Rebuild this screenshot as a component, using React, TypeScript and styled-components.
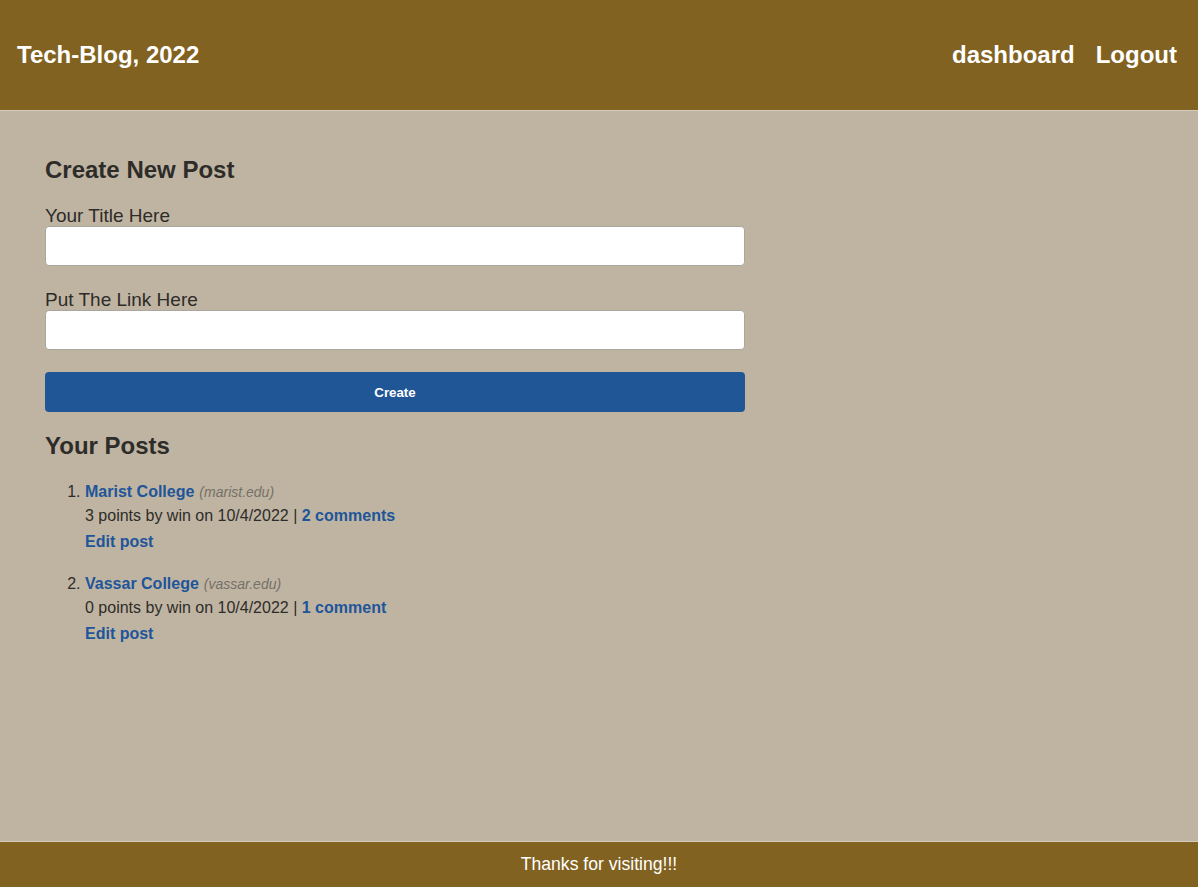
import React from "react";
import styled, { createGlobalStyle } from "styled-components";

const Global = createGlobalStyle`
  html, body { margin: 0; padding: 0; }
  body {
    font-family: "Liberation Sans", Arial, Helvetica, sans-serif;
    background: #bfb4a2;
    color: #2e2c29;
  }
  * { box-sizing: border-box; }
`;

const Page = styled.div`
  min-height: 100vh;
  display: flex;
  flex-direction: column;
`;

const Header = styled.header`
  height: 111px;
  background: #826220;
  border-bottom: 1px solid #d6ccbc;
  display: flex;
  align-items: center;
  justify-content: space-between;
  padding: 0 21px 0 17px;
  color: #fff;
`;

const Brand = styled.a`
  font-size: 24px;
  line-height: 28px;
  font-weight: 700;
  color: #fff;
  text-decoration: none;
`;

const Nav = styled.nav`
  display: flex;
  gap: 21px;
`;

const NavLink = styled.a`
  font-size: 24px;
  line-height: 28px;
  font-weight: 700;
  color: #fff;
  text-decoration: none;
`;

const Main = styled.main`
  flex: 1;
  padding: 46px 45px 40px;
`;

const Column = styled.div`
  width: 700px;
  display: flex;
  flex-direction: column;
`;

const Heading = styled.h2`
  margin: 0;
  font-size: 24px;
  line-height: 26px;
  font-weight: 700;
  color: #2e2c29;
`;

const Form = styled.form`
  display: flex;
  flex-direction: column;
  margin-top: 22px;
`;

const Label = styled.label`
  font-size: 19px;
  line-height: 21px;
  color: #2e2c29;
`;

const Input = styled.input`
  height: 40px;
  width: 100%;
  background: #fff;
  border: 1px solid #a9a59f;
  border-radius: 4px;
  margin-bottom: 23px;
  font-size: 16px;
  padding: 0 8px;
`;

const Button = styled.button`
  height: 40px;
  width: 100%;
  background: #205596;
  color: #fff;
  border: none;
  border-radius: 4px;
  font-family: "Liberation Sans", Arial, sans-serif;
  font-weight: 700;
  font-size: 13.3px;
  margin-top: -1px;
`;

const PostsHeading = styled(Heading)`
  margin-top: 21px;
`;

const List = styled.ol`
  margin: 21px 0 0;
  padding-left: 40px;
  font-size: 16px;
  color: #2e2c29;
`;

const Item = styled.li`
  line-height: 24px;
  margin-bottom: 18px;
`;

const TitleLink = styled.a`
  color: #20559a;
  font-weight: 700;
  text-decoration: none;
`;

const Domain = styled.span`
  color: #757069;
  font-style: italic;
  font-size: 14px;
  margin-left: 5px;
`;

const Meta = styled.div``;

const EditLink = styled.a`
  display: block;
  margin-top: 2px;
  color: #20559a;
  font-weight: 700;
  text-decoration: none;
`;

const Footer = styled.footer`
  height: 46px;
  background: #826220;
  border-top: 1px solid #d6ccbc;
  color: #fff;
  font-size: 17.6px;
  display: flex;
  align-items: center;
  justify-content: center;
`;

const posts = [
  { title: "Marist College", domain: "marist.edu", points: 3, comments: "2 comments" },
  { title: "Vassar College", domain: "vassar.edu", points: 0, comments: "1 comment" },
];

export default function App() {
  return (
    <Page>
      <Global />
      <Header>
        <Brand href="#">Tech-Blog, 2022</Brand>
        <Nav>
          <NavLink href="#">dashboard</NavLink>
          <NavLink href="#">Logout</NavLink>
        </Nav>
      </Header>
      <Main>
        <Column>
          <Heading>Create New Post</Heading>
          <Form onSubmit={(e) => e.preventDefault()}>
            <Label htmlFor="title">Your Title Here</Label>
            <Input id="title" type="text" />
            <Label htmlFor="link">Put The Link Here</Label>
            <Input id="link" type="text" />
            <Button type="submit">Create</Button>
          </Form>
          <PostsHeading>Your Posts</PostsHeading>
          <List>
            {posts.map((p) => (
              <Item key={p.title}>
                <TitleLink href="#">{p.title}</TitleLink>
                <Domain>({p.domain})</Domain>
                <Meta>
                  {p.points} points by win on 10/4/2022 | <TitleLink href="#">{p.comments}</TitleLink>
                </Meta>
                <EditLink href="#">Edit post</EditLink>
              </Item>
            ))}
          </List>
        </Column>
      </Main>
      <Footer>Thanks for visiting!!!</Footer>
    </Page>
  );
}
